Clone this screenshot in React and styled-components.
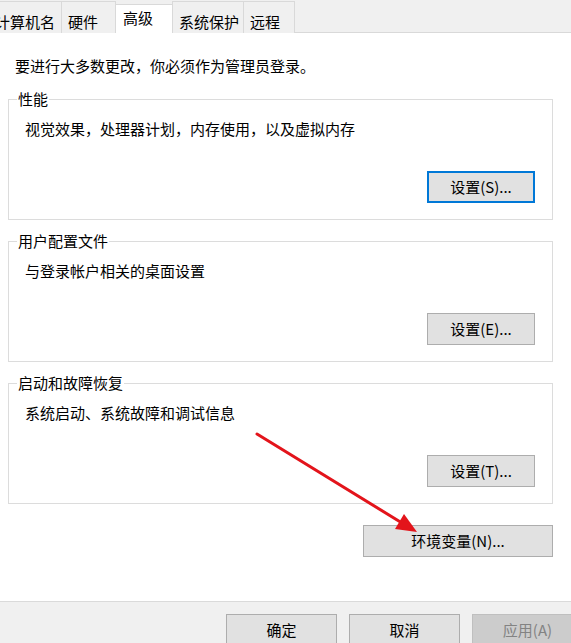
import React from 'react';
import styled, { createGlobalStyle, css } from 'styled-components';

const GlobalStyle = createGlobalStyle`
  html, body { margin:0; padding:0; background:#f0f0f0; overflow:hidden; }
  * { box-sizing:border-box; }
`;

const tabs = [
  { label: '计算机名', width: 74 },
  { label: '硬件', width: 55 },
  { label: '高级', width: 58, active: true },
  { label: '系统保护', width: 72 },
  { label: '远程', width: 52 },
];

const groups = [
  { title: '性能', desc: '视觉效果，处理器计划，内存使用，以及虚拟内存', btn: '设置(S)...', focused: true },
  { title: '用户配置文件', desc: '与登录帐户相关的桌面设置', btn: '设置(E)...' },
  { title: '启动和故障恢复', desc: '系统启动、系统故障和调试信息', btn: '设置(T)...' },
];

export default function App() {
  return (
    <Dialog>
      <GlobalStyle />
      <TabStrip>
        {tabs.map((t) => (
          <Tab key={t.label} $w={t.width} $active={t.active}>{t.label}</Tab>
        ))}
      </TabStrip>

      <Panel>
        <Intro>要进行大多数更改，你必须作为管理员登录。</Intro>
        {groups.map((g) => (
          <GroupBox key={g.title}>
            <legend>{g.title}</legend>
            <GroupDesc>{g.desc}</GroupDesc>
            <BtnRow>
              <WinButton $focused={g.focused}>{g.btn}</WinButton>
            </BtnRow>
          </GroupBox>
        ))}
        <EnvRow>
          <WinButton $wide>环境变量(N)...</WinButton>
        </EnvRow>
      </Panel>

      <Footer>
        <WinButton $footer>确定</WinButton>
        <WinButton $footer>取消</WinButton>
        <WinButton $footer $disabled>应用(A)</WinButton>
      </Footer>

      <ArrowLayer width="571" height="643" viewBox="0 0 571 643">
        <line x1="257" y1="434" x2="402" y2="523" stroke="#e3141b" strokeWidth="3" strokeLinecap="round" />
        <polygon points="417,532 395,529 404,514" fill="#e3141b" />
      </ArrowLayer>
    </Dialog>
  );
}

const Dialog = styled.div`
  width:571px; height:643px; position:relative; overflow:hidden;
  display:flex; flex-direction:column; background:#f0f0f0;
  font-family:"Noto Sans CJK SC", "Microsoft YaHei", sans-serif; font-size:15px; line-height:20px; color:#000;
`;

const TabStrip = styled.div`
  height:33px; display:flex; align-items:flex-end; border-bottom:1px solid #d9d9d9;
  margin-left:-12px; flex-shrink:0;
`;

const Tab = styled.div`
  width:${(p) => p.$w}px; height:32px; margin-right:-1px; margin-bottom:-1px;
  padding:10px 0 0 6px; white-space:nowrap; overflow:hidden;
  background:#f0f0f0; border:1px solid #d9d9d9; border-bottom:0;
  ${(p) => p.$active && css`
    height:29px; padding:3px 0 0 7px; background:#fff; position:relative; z-index:1;
  `}
`;

const Panel = styled.div`
  flex:1; background:#fff; border-bottom:1px solid #dadada;
  padding:23px 18px 0 8px; display:flex; flex-direction:column;
`;

const Intro = styled.div`
  margin:0 0 13px 7px;
`;

const GroupBox = styled.fieldset`
  margin:0 0 11px; border:1px solid #dcdcdc; padding:0 17px 16px 15px; min-width:0;
  legend { padding:0 1px; margin-left:-7px; line-height:20px; }
`;

const GroupDesc = styled.div`
  margin-top:10px; padding-left:1px;
`;

const BtnRow = styled.div`
  display:flex; justify-content:flex-end; margin-top:32px;
`;

const EnvRow = styled.div`
  display:flex; justify-content:flex-end; margin-top:10px;
`;

const WinButton = styled.button`
  font:inherit; color:#000; height:32px; width:108px; padding:0;
  background:#e1e1e1; border:1px solid #adadad; border-radius:0;
  display:flex; align-items:center; justify-content:center;
  ${(p) => p.$focused && css`border:2px solid #0078d7;`}
  ${(p) => p.$wide && css`width:190px;`}
  ${(p) => p.$footer && css`width:111px; flex-shrink:0;`}
  ${(p) => p.$disabled && css`background:#cccccc; border-color:#bfbfbf; color:#838383;`}
`;

const Footer = styled.div`
  height:41px; flex-shrink:0; display:flex; justify-content:flex-end; align-items:flex-start;
  gap:12px; padding-top:12px; margin-right:-12px;
`;

const ArrowLayer = styled.svg`
  position:absolute; left:0; top:0; pointer-events:none;
`;
